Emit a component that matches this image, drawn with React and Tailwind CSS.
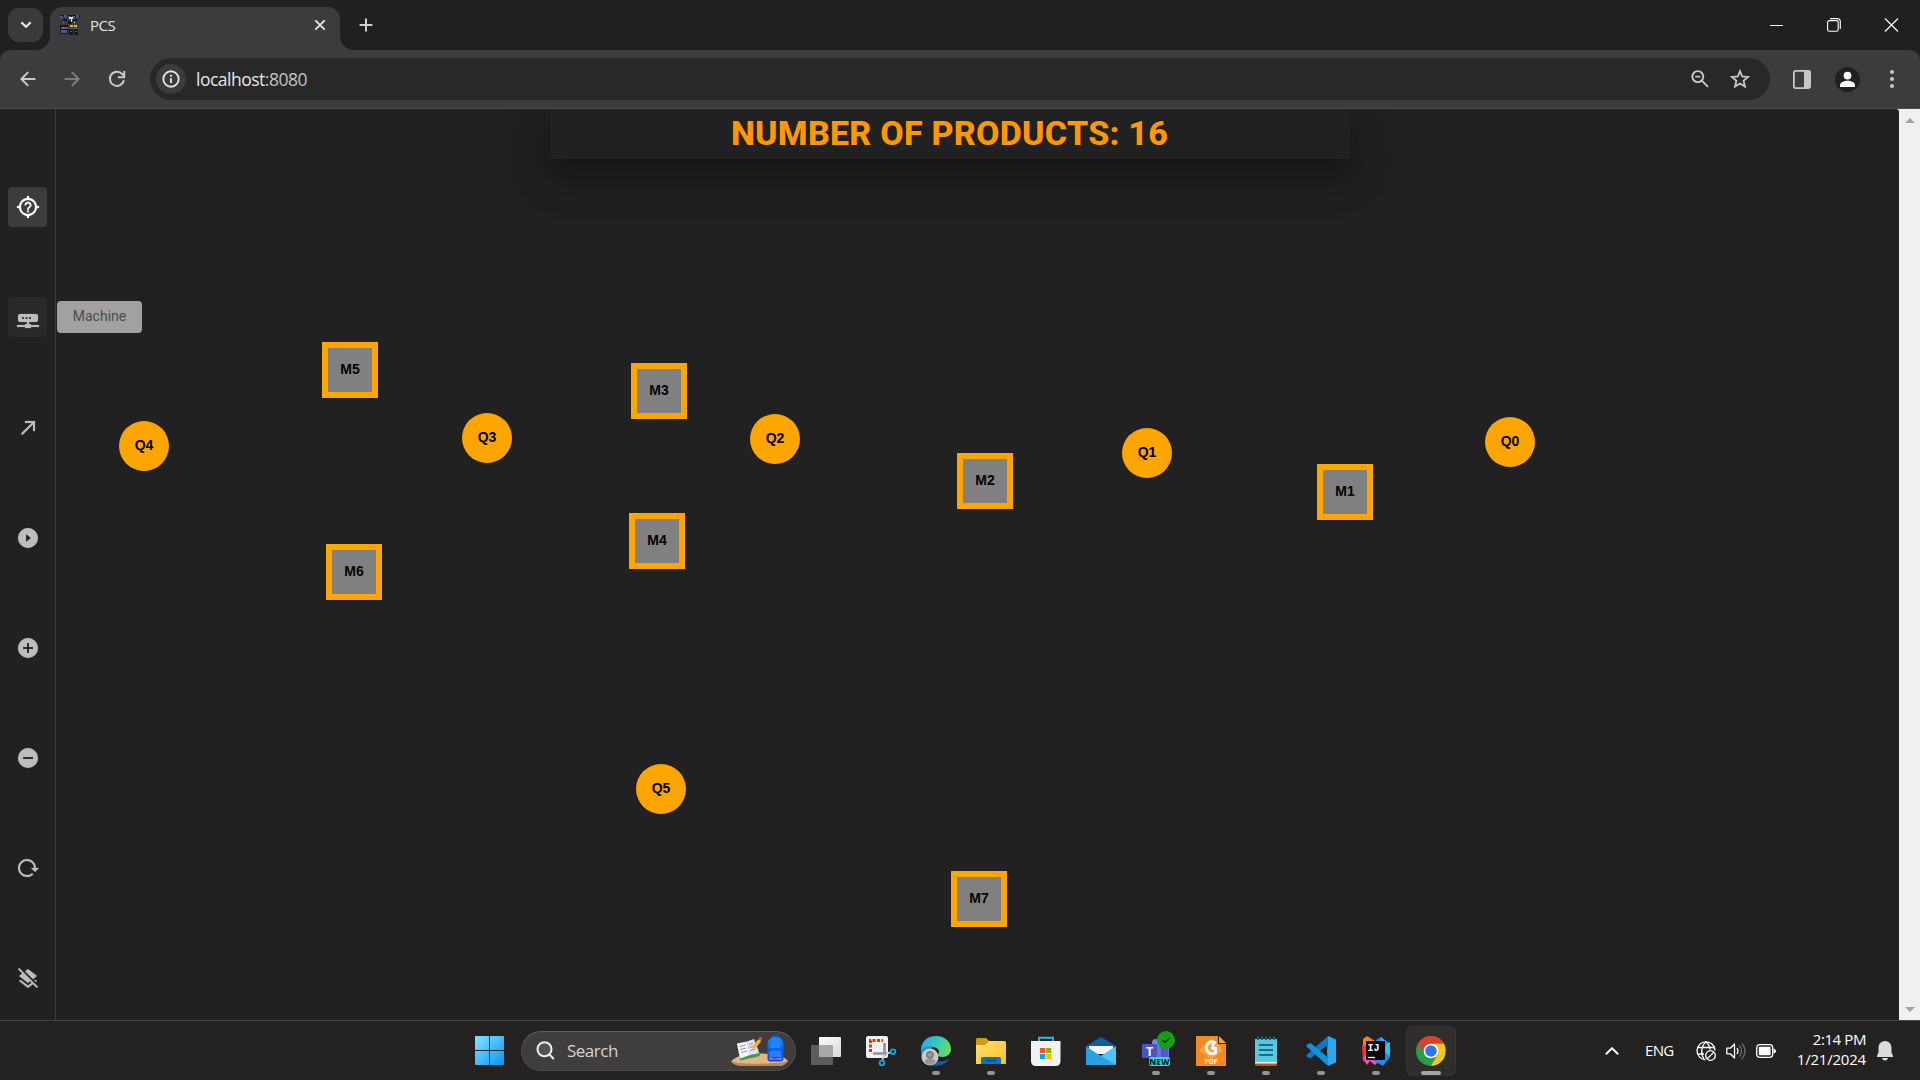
import React from "react";

const ICONS = {
  help: "M3.05 13H1V11H3.05C3.5 6.83 6.83 3.5 11 3.05V1H13V3.05C17.17 3.5 20.5 6.83 20.95 11H23V13H20.95C20.5 17.17 17.17 20.5 13 20.95V23H11V20.95C6.83 20.5 3.5 17.17 3.05 13M12 5C8.13 5 5 8.13 5 12S8.13 19 12 19 19 15.87 19 12 15.87 5 12 5M11.13 17.25H12.88V15.5H11.13V17.25M12 6.75C10.07 6.75 8.5 8.32 8.5 10.25H10.25C10.25 9.28 11.03 8.5 12 8.5S13.75 9.28 13.75 10.25C13.75 12 11.13 11.78 11.13 14.63H12.88C12.88 12.66 15.5 12.44 15.5 10.25C15.5 8.32 13.93 6.75 12 6.75Z",
  machine: "M4 9H20A2 2 0 0 1 22 11V15A2 2 0 0 1 20 17H13V19H14A1 1 0 0 1 15 20H23V22H15A1 1 0 0 1 14 23H10A1 1 0 0 1 9 22H1V20H9A1 1 0 0 1 10 19H11V17H4A2 2 0 0 1 2 15V11A2 2 0 0 1 4 9M6 12V14H8V12H6M9.5 12V14H11.5V12H9.5M13 12V14H15V12H13Z",
  arrow: "M5,17.59L15.59,7H9V5H19V15H17V8.41L6.41,19L5,17.59Z",
  play: "M2,12A10,10 0 0,1 12,2A10,10 0 0,1 22,12A10,10 0 0,1 12,22A10,10 0 0,1 2,12M10,16L15,12L10,8V16Z",
  plus: "M17,13H13V17H11V13H7V11H11V7H13V11H17M12,2A10,10 0 0,0 2,12A10,10 0 0,0 12,22A10,10 0 0,0 22,12A10,10 0 0,0 12,2Z",
  minus: "M17,13H7V11H17M12,2A10,10 0 0,0 2,12A10,10 0 0,0 12,22A10,10 0 0,0 22,12A10,10 0 0,0 12,2Z",
  reload: "M2 12C2 16.97 6.03 21 11 21C13.39 21 15.68 20.06 17.4 18.4L15.9 16.9C14.63 18.25 12.86 19 11 19C4.76 19 1.64 11.46 6.05 7.05C10.46 2.64 18 5.77 18 12H15L19 16H19.1L23 12H20C20 7.03 15.97 3 11 3C6.03 3 2 7.03 2 12Z",
  layersOff: "M3.27,1L2,2.27L6.22,6.5L3,9L4.63,10.27L12,16L14.1,14.37L15.53,15.8L12,18.54L4.63,12.81L3,14.07L12,21.07L16.95,17.22L20.73,21L22,19.73L3.27,1M19.36,10.27L21,9L12,2L9.09,4.27L16.96,12.15L19.36,10.27M19.81,15L21,14.07L19.57,12.64L18.38,13.56L19.81,15Z",
};

const TOOLS = [
  { icon: "help", cls: "bg-[#3c3c3c] text-white" },
  { icon: "machine", cls: "mt-[70px] bg-[#292929] text-[#bdbdbd]", tip: "Machine" },
  { icon: "arrow", cls: "mt-[71px] text-[#bdbdbd]" },
  { icon: "play", cls: "mt-[70px] text-[#bdbdbd]" },
  { icon: "plus", cls: "mt-[70px] text-[#bdbdbd]" },
  { icon: "minus", cls: "mt-[70px] text-[#bdbdbd]" },
  { icon: "reload", cls: "mt-[70px] text-[#bdbdbd]" },
  { icon: "layersOff", cls: "mt-[71px] text-[#bdbdbd]" },
];

// Canvas coordinates of the top-left corner of every node.
const MACHINES = [
  { id: "M5", x: 322, y: 233 },
  { id: "M3", x: 631, y: 254 },
  { id: "M4", x: 629, y: 404 },
  { id: "M6", x: 326, y: 435 },
  { id: "M2", x: 957, y: 344 },
  { id: "M1", x: 1317, y: 355 },
  { id: "M7", x: 951, y: 762 },
];
const QUEUES = [
  { id: "Q4", x: 119, y: 312 },
  { id: "Q3", x: 462, y: 304 },
  { id: "Q2", x: 750, y: 305 },
  { id: "Q1", x: 1122, y: 319 },
  { id: "Q0", x: 1485, y: 308 },
  { id: "Q5", x: 636, y: 655 },
];

function Favicon() {
  return (
    <svg width="20" height="20" viewBox="0 0 20 20" shapeRendering="crispEdges">
      <path fill="#15171c" d="M0 0h20v2H0zM3 4h4v2H3zM14 4h3v2h-3zM8 6h4v3H8zM0 10h8v9H0zM9 14h4v6H9zM14 14h4v6h-4z" />
      <path fill="#4a5c8c" d="M0 1h3v2H0zM4 0h3v2H4zM8 1h3v1H8zM12 1h3v2h-3zM16 0h3v2h-3zM3 6h1v3H3zM1 12h7v2H1zM1 15h6v3H1zM9 13h10v1H9zM10 16h2v1h-2zM15 16h2v1h-2z" />
      <path fill="#d6d8de" d="M9 2h4v2H9zM11 4h1v3h-1zM14 7h1v1h-1z" />
      <path fill="#e9b824" d="M10 10h3v2h-3zM14 10h3v2h-3z" />
      <path fill="#59c08c" d="M3 12h1v1H3z" />
    </svg>
  );
}

function TabStrip() {
  return (
    <div className="flex h-[50px] items-end bg-[#1f2120]">
      <div className="mb-2 ml-2 flex h-[34px] w-[35px] items-center justify-center rounded-[11px] bg-[#3a3a3a]">
        <svg width="12" height="8" viewBox="0 0 12 8" fill="none" stroke="#e8e8e8" strokeWidth="2.2">
          <path d="M1.3 1.2 6 5.8l4.7-4.6" />
        </svg>
      </div>
      <div className="relative ml-[7px] flex h-[43px] w-[290px] items-center rounded-t-[12px] bg-[#3c3c3c] pb-[7px] pl-[10px] pr-[14px]">
        <svg className="absolute -left-[14px] bottom-0" width="14" height="14" viewBox="0 0 14 14">
          <path d="M14 0v14H0A14 14 0 0 0 14 0" fill="#3c3c3c" />
        </svg>
        <svg className="absolute -right-[14px] bottom-0" width="14" height="14" viewBox="0 0 14 14">
          <path d="M0 0v14h14A14 14 0 0 1 0 0" fill="#3c3c3c" />
        </svg>
        <Favicon />
        <span className="ml-[10px] text-[15px] tracking-[-0.5px] text-[#e3e3e3]">PCS</span>
        <svg className="ml-auto" width="12" height="12" viewBox="0 0 12 12" stroke="#e3e3e3" strokeWidth="1.9">
          <path d="M1.3 1.3l9.4 9.4M10.7 1.3l-9.4 9.4" />
        </svg>
      </div>
      <svg className="mb-[18px] ml-[18.500px]" width="14" height="14" viewBox="0 0 14 14" stroke="#cfcfcf" strokeWidth="2">
        <path d="M7 .6v12.8M.6 7h12.8" />
      </svg>
      <div className="mb-[18px] ml-auto mr-[21px] flex items-center gap-[42px]">
        <svg className="mr-[1px]" width="14" height="14" viewBox="0 0 14 14" stroke="#fff" strokeWidth="1"><path d="M0 7.5h13" /></svg>
        <svg className="mr-[1px]" width="14" height="14" viewBox="0 0 14 14" fill="none" stroke="#fff" strokeWidth="1.1">
          <rect x=".6" y="2.6" width="10.6" height="10.6" rx="1.8" />
          <path d="M3 .6h7.3a3 3 0 0 1 3 3v7.3" />
        </svg>
        <svg width="15" height="14" viewBox="0 0 15 14" stroke="#fff" strokeWidth="1.1"><path d="M1 .5l13 13M14 .5l-13 13" /></svg>
      </div>
    </div>
  );
}

function Toolbar() {
  return (
    <div className="bg-[#1f2120]">
      <div className="flex h-[59px] items-center rounded-t-[10px] border-b border-[#4b4b4b] bg-[#3c3c3c] pl-[20px] pr-[25px]">
        <svg width="16" height="16" viewBox="0 0 16 16" fill="none" stroke="#c9c9c9" strokeWidth="2">
          <path d="M15.4 8H1.6M8.2 1.1 1.4 8l6.8 6.9" />
        </svg>
        <svg className="ml-[28px]" width="16" height="16" viewBox="0 0 16 16" fill="none" stroke="#7c7c7c" strokeWidth="2">
          <path d="M.6 8h13.800M7.800 1.100 14.600 8l-6.800 6.900" />
        </svg>
        <svg className="ml-[28px]" width="18" height="18" viewBox="0 0 18 18" fill="none" stroke="#c9c9c9" strokeWidth="2">
          <path d="M15.900 10.200A7.100 7.100 0 1 1 14.400 4.200L16 6.200" />
          <path d="M16.200 1v6.200H10" />
        </svg>
        <div className="ml-[24px] flex h-[42px] w-[1620px] items-center rounded-full bg-[#282828] pl-[6px] pr-[20px]">
          <div className="flex size-[30px] items-center justify-center rounded-full bg-[#3c3c3c]">
            <svg width="18" height="18" viewBox="0 0 18 18" fill="none" stroke="#e3e3e3" strokeWidth="1.9">
              <circle cx="9" cy="9" r="7.7" />
              <path d="M9 8.2v4.8M9 4.8v1.9" />
            </svg>
          </div>
          <span className="ml-[10px] text-[17.500px] tracking-[-0.5px] text-[#e6e6e6]">
            localhost<span className="text-[#c4c4c4]">:8080</span>
          </span>
          <svg className="ml-auto" width="18" height="18" viewBox="0 0 18 18" fill="none" stroke="#c7c7c7" strokeWidth="1.9">
            <circle cx="6.8" cy="6.6" r="5.5" />
            <path d="M4.2 6.6h5.2M10.8 10.6l6.2 6.3" />
          </svg>
          <svg className="ml-[21px]" width="20" height="20" viewBox="0 0 20 20" fill="none" stroke="#c7c7c7" strokeWidth="1.8">
            <path d="M10 2.2l2.2 5.3 5.8.5-4.4 3.8 1.4 5.7-5-3-5 3 1.4-5.7L2 8l5.8-.5z" />
          </svg>
        </div>
        <svg className="ml-[23px]" width="18" height="19" viewBox="0 0 18 19">
          <rect x=".9" y=".9" width="16.2" height="17.2" rx="1.5" fill="none" stroke="#c7c7c7" strokeWidth="1.8" />
          <path d="M11 1h6v17h-6z" fill="#c7c7c7" />
        </svg>
        <svg className="ml-[24px]" width="25" height="25" viewBox="0 0 25 25">
          <circle cx="12.5" cy="12.5" r="12.5" fill="#1f2120" />
          <circle cx="12.5" cy="8.6" r="3.9" fill="#fff" />
          <path d="M5 19.9v-1.6c0-3 4-4.5 7.5-4.5s7.5 1.5 7.5 4.5v1.6z" fill="#fff" />
        </svg>
        <svg className="ml-auto" width="6" height="18" viewBox="0 0 6 18" fill="#c7c7c7">
          <circle cx="3" cy="2" r="2" /><circle cx="3" cy="9" r="2" /><circle cx="3" cy="16" r="2" />
        </svg>
      </div>
    </div>
  );
}

function Sidebar() {
  return (
    <nav className="flex w-[56px] shrink-0 flex-col border-r border-[#3d3d3d] pl-2 pt-[78px]">
      {TOOLS.map((t) => (
        <div key={t.icon} className={"relative flex h-10 w-[39px] shrink-0 items-center justify-center rounded " + t.cls}>
          <svg className="relative left-[0.5px] size-6 shrink-0" viewBox="0 0 24 24" fill="currentColor" stroke="currentColor" strokeWidth=".2" fillRule="evenodd">
            <path d={ICONS[t.icon]} />
          </svg>
          {t.tip && (
            <div className="absolute left-[49px] top-[4px] z-10 flex h-8 w-[85px] items-center justify-center rounded bg-[#a1a1a1] pb-[2px] font-[Roboto,sans-serif] text-sm text-[#4c4c4c]">
              {t.tip}
            </div>
          )}
        </div>
      ))}
    </nav>
  );
}

function Page() {
  return (
    <div className="flex h-[911px] bg-[#f0f0f0]">
      <main className="relative flex w-[1899px] overflow-hidden rounded-tr-[3px] bg-[#212121]">
        <Sidebar />
        <div className="flex flex-1 items-start justify-center pr-[56px]">
          <h1 className="flex h-[50px] w-[800px] items-center justify-center rounded-b bg-[#212121] pb-[2px] font-[Roboto,sans-serif] text-[34px] font-extrabold tracking-[0.25px] text-[#ff9800] shadow-[0_11px_15px_-7px_rgba(0,0,0,0.2),0_24px_38px_3px_rgba(0,0,0,0.14),0_9px_46px_8px_rgba(0,0,0,0.12)]">
            NUMBER OF PRODUCTS: 16
          </h1>
        </div>
        {MACHINES.map((m) => (
          <div
            key={m.id}
            style={{ left: m.x, top: m.y }}
            className="absolute flex size-14 items-center justify-center border-[6px] border-[#ffa500] bg-[#808080] pb-[2px] font-['Liberation_Sans',sans-serif] text-sm font-bold text-black"
          >
            {m.id}
          </div>
        ))}
        {QUEUES.map((q) => (
          <div
            key={q.id}
            style={{ left: q.x, top: q.y }}
            className="absolute flex size-[50px] items-center justify-center rounded-full bg-[#ffa500] pb-[2px] font-['Liberation_Sans',sans-serif] text-sm font-bold text-black"
          >
            {q.id}
          </div>
        ))}
      </main>
      <div className="flex flex-1 flex-col items-center justify-between pb-[8px] pt-[9px]">
        <svg width="10" height="5" viewBox="0 0 10 5" fill="#a3a3a3"><path d="M0 5 5 0l5 5z" /></svg>
        <svg width="10" height="5" viewBox="0 0 10 5" fill="#a3a3a3"><path d="M0 0h10L5 5z" /></svg>
      </div>
    </div>
  );
}

function SearchArt() {
  return (
    <svg width="58" height="32" viewBox="0 0 58 32">
      <defs>
        <linearGradient id="pack" x1="0" y1="0" x2="0" y2="1">
          <stop offset="0" stopColor="#1f8fff" /><stop offset=".5" stopColor="#0a62e8" /><stop offset="1" stopColor="#0b50c8" />
        </linearGradient>
      </defs>
      <path d="M0 26.500C6 20 16 18.500 29 18.500S52 20 57 26c-2 2-4 4-7 5H9c-4-1-7-2.500-9-4.500" fill="#e2b683" />
      <path d="M0 26.500C2 28.500 5 30 9 31h41c3-1 5-3 7-5-8 3-45 4-57 .5" fill="#b98a5c" />
      <path d="M6 9l3 16.500 20-4.500-2-9z" fill="#3f9a54" />
      <path d="M6 8.500l10-2 3 13.500-10 3.500z" fill="#f7f5fa" /><path d="M16 6.500l7-2.500 5 14-9 2z" fill="#e6e2f2" />
      <path d="M8.500 11.500l6-1.300M9.200 14.500l6-1.400M10 17.500l6-1.400M18 9.500l4-1.400M18.600 12.500l4.500-1.500M19.500 15.500l5-1.500" stroke="#8d86b0" strokeWidth=".9" />
      <path d="M21 14l1.500-4 5-6 2.800 2-5 6.500z" fill="#ffb02e" /><path d="M27.500 4l1.500-2.500 2.400 1.500-1.200 3z" fill="#e8453c" />
      <path d="M41 3.500C41 -.3 48 -.3 48 3.500" fill="none" stroke="#0e59c9" strokeWidth="1.600" />
      <path d="M36.500 10c0-5 3-8 8-8s8 3 8 8v13.500c0 2-1 3-3 3h-10c-2 0-3-1-3-3z" fill="url(#pack)" />
      <path d="M39.500 8c2-4 8-4 10 0v5h-10z" fill="#1e86ff" /><path d="M38.500 17c2-2.500 10-2.500 12 0v5h-12z" fill="#2b7bff" />
      <path d="M38.500 22.500c4 1.500 8 1.500 12 0v2h-12z" fill="#b77bff" />
    </svg>
  );
}

const APP_ICONS = {
  taskview: (
    <>
      <defs>
        <linearGradient id="tv" x1="0" y1="0" x2="1" y2="1"><stop offset="0" stopColor="#fff" /><stop offset="1" stopColor="#d8d8d8" /></linearGradient>
      </defs>
      <rect x="8" y="1" width="22" height="20" rx="1" fill="url(#tv)" />
      <rect x="0" y="9" width="22" height="20" rx="1" fill="#5c5c5c" /><path d="M8 9h14v12H8z" fill="#a9a9a9" />
    </>
  ),
  snip: (
    <>
      <rect x="0" y="0" width="22" height="22" rx="2" fill="#eef1f6" />
      <path d="M4.500 16V4.500H17" fill="none" stroke="#d83b01" strokeWidth="3" strokeDasharray="3 1.500" />
      <path d="M18.500 7v13M7 17.500h14" stroke="#8d949b" strokeWidth="2.600" />
      <path d="M18.500 18l-2 6M20 17.500l5-1" stroke="#c4c9ce" strokeWidth="2" />
      <circle cx="16" cy="27" r="2.300" fill="none" stroke="#1ba0e2" strokeWidth="1.800" /><circle cx="27" cy="15.700" r="2.300" fill="none" stroke="#1ba0e2" strokeWidth="1.800" />
    </>
  ),
  edge: (
    <>
      <defs>
        <linearGradient id="e1" x1="0" y1=".3" x2="1" y2=".6"><stop offset="0" stopColor="#2aa8e8" /><stop offset=".5" stopColor="#33c9c0" /><stop offset="1" stopColor="#6be04c" /></linearGradient>
        <linearGradient id="e2" x1="0" y1="0" x2="0" y2="1"><stop offset="0" stopColor="#1b9de0" /><stop offset="1" stopColor="#0d4fa8" /></linearGradient>
      </defs>
      <path d="M0 14C0 6 6 0 15 0c9 0 15 6 15 13 0 5-4 8-8.500 8-3 0-5-1-4.500-2.500 2-2 1-6-3-7C9 10 3 11 0 16z" fill="url(#e1)" />
      <path d="M0 15c2-4 7-6 12-4-4 3-4 10 1 13 4 2.500 10 2 15-1-3 4.500-8 7-13 7C6 30 0 23 0 15" fill="url(#e2)" />
      <circle cx="9" cy="21" r="8.500" fill="#c9c9c9" /><circle cx="9" cy="18.800" r="3" fill="#a2a2a2" stroke="#7a7a7a" strokeWidth="1.800" /><path d="M3.500 26c1-5 10-5 11 0-3 3.500-8 3.500-11 0" fill="#949494" />
    </>
  ),
  files: (
    <>
      <defs>
        <linearGradient id="fo" x1="0" y1="0" x2="1" y2="1"><stop offset="0" stopColor="#ffdf73" /><stop offset="1" stopColor="#fcbf28" /></linearGradient>
      </defs>
      <path d="M0 3.500Q0 2 1.500 2H10l4 4v6H0z" fill="#d79a0a" />
      <path d="M0 9h9l4-4h15.500Q30 5 30 6.500V28H0z" fill="url(#fo)" />
      <path d="M5 28v-5q0-2 2-2h16q2 0 2 2v5z" fill="#1170c4" /><path d="M10 24.500h10" stroke="#0b4c8a" strokeWidth="1.500" />
    </>
  ),
  store: (
    <>
      <path d="M8 8V1.800h14V8" fill="none" stroke="#2fb5ee" strokeWidth="1.900" />
      <path d="M0 5h29.500v20q0 5-5 5H5q-5 0-5-5z" fill="#f1f1f1" />
      <path d="M9 12h5.200v5H9z" fill="#f25022" /><path d="M15.200 12h5v5h-5z" fill="#7fba00" /><path d="M9 18h5.200v5H9z" fill="#00a4ef" /><path d="M15.200 18h5v5h-5z" fill="#ffb900" />
    </>
  ),
  mail: (
    <>
      <path d="M0 10 15 1l15 9v5H0z" fill="#0f5ea8" /><path d="M3 10h24v8H3z" fill="#f3f3f3" />
      <path d="M0 10.500 15 20l15-9.500V29H0z" fill="#2b9fe6" /><path d="M30 10.500V29L12 18.500l3 1.500z" fill="#4fc4f5" />
    </>
  ),
  teams: (
    <>
      <circle cx="15" cy="7" r="4" fill="#7b83eb" /><path d="M12 9h16v11q0 5-6 5h-6z" fill="#6a71d8" />
      <path d="M20 12h7v11h-7z" fill="#5059c9" /><rect x="1" y="8" width="15" height="14" rx="1" fill="#4b53bc" />
      <text x="8.600" y="19.600" textAnchor="middle" fontSize="12.500" fontWeight="700" fill="#fff" fontFamily="Open Sans, sans-serif">T</text>
      <circle cx="25" cy="4" r="9" fill="#13a10e" /><path d="M21.500 4.200l2.500 2.300 4.500-4.500" fill="none" stroke="#0b3d0a" strokeWidth="1.600" />
      <rect x="8" y="21" width="21" height="9" rx="2" fill="#22e1e8" />
      <text x="18.500" y="28.600" textAnchor="middle" fontSize="8.400" fontWeight="800" fill="#0b2b30" fontFamily="Open Sans, sans-serif">NEW</text>
    </>
  ),
  pdf: (
    <>
      <path d="M0 0h22l8 8v22H0z" fill="#f58a1f" /><path d="M23 0l7 7h-7z" fill="#f9a23b" /><path d="M22.500 0v7.500H30" fill="none" stroke="#2b2320" strokeWidth="1" />
      <path d="M15 2l12 12-12 10L3 14z" fill="#f8a04a" />
      <path d="M19.800 7.200A5.800 6 0 1 0 19.500 16.500V12.300h-4.500M18.800 5.800l-2.800 4.700" fill="none" stroke="#fff" strokeWidth="2.900" />
      <text x="15.300" y="27.500" textAnchor="middle" fontSize="6.600" fontWeight="700" fill="#fff" fontFamily="Inter, sans-serif">PDF</text>
    </>
  ),
  notepad: (
    <>
      <path d="M4 3h22v24H4z" fill="#5cc6e0" /><path d="M4 27h22v1.500q0 1.500-1.500 1.500h-19Q4 30 4 28.500z" fill="#b35b14" /><path d="M4 26h22v1.500H4z" fill="#e9eef0" />
      <path d="M7 .5v3.500M11 .5v3.500M15 .5v3.500M19 .5v3.500M23 .5v3.500" stroke="#11667f" strokeWidth="2" />
      <path d="M8 9h14M8 14h14M8 19h14" stroke="#14708a" strokeWidth="1.800" />
    </>
  ),
  code: (
    <>
      <path d="M22 0l8 3.500v23L22 30 21 15z" fill="#2ba7f2" /><path d="M22 0v8.500L4.500 22.500 1 21q-1.500-1.200 0-2.500z" fill="#0a78c4" />
      <path d="M22 30v-8.500L4.500 7 1 8.500q-1.500 1.200 0 2.500z" fill="#1390dc" />
    </>
  ),
  idea: (
    <>
      <path d="M2 3l4-3 8 5-6 12-6-3z" fill="#fc801d" /><path d="M1 9l6 1v12l-5 3z" fill="#fe2857" /><path d="M2 23l5-9 12 10-5 5-5-4-3 4z" fill="#ec4fb5" />
      <path d="M15 4l5-3 8 6 1 14-7 9-9-5z" fill="#1a8bf4" /><path d="M20 1l5 5-4 4zM25 8l4-2 0 14-5-4z" fill="#27c3f3" />
      <path d="M5 5h19v19H5z" fill="#0b0608" />
      <text x="6.500" y="15" fontSize="10" fontWeight="700" fill="#fff" fontFamily="Liberation Mono, monospace">IJ</text>
      <path d="M7 21.500h7" stroke="#fff" strokeWidth="1.300" />
    </>
  ),
  chrome: (
    <>
      <circle cx="15" cy="15" r="15" fill="#2a9d48" />
      <path d="M15 7.500h13q3 6.500 0 14.500Q24 29 15 30l6.500-11.300z" fill="#fcc31e" />
      <path d="M2 7.500A15 15 0 0 1 28 7.500H15a7.500 7.500 0 0 0-6.500 11z" fill="#e33b2e" />
      <circle cx="15" cy="15" r="7.300" fill="#fff" /><circle cx="15" cy="15" r="5.800" fill="#2c78ea" />
    </>
  ),
};

const APPS = [
  ["taskview", false], ["snip", false], ["edge", true], ["files", true], ["store", false], ["mail", false],
  ["teams", true], ["pdf", true], ["notepad", true], ["code", true], ["idea", true], ["chrome", true],
];

function Taskbar() {
  return (
    <footer className="flex h-[60px] items-center border-t border-[#474645] bg-[#232221] pl-[475px] pr-[27px]">
      <svg width="29" height="29" viewBox="0 0 29 29">
        <defs>
          <linearGradient id="win" x1="0" y1="0" x2="1" y2="1"><stop offset="0" stopColor="#7fe6ff" /><stop offset="1" stopColor="#0a93f5" /></linearGradient>
        </defs>
        <path fill="url(#win)" d="M0 1q0-1 1-1h13v14H0zM15 0h13q1 0 1 1v13H15zM0 15h14v14H1q-1 0-1-1zM15 15h14v13q0 1-1 1H15z" />
      </svg>
      <div className="ml-[17px] flex h-10 w-[275px] items-center rounded-full border border-[#4c4b4a] border-t-[#605d5d] bg-[#3f3e3d] pl-[14px] pr-[6px]">
        <svg width="19" height="19" viewBox="0 0 19 19" fill="none" stroke="#ececec" strokeWidth="2.100">
          <circle cx="8.500" cy="8.300" r="7" fill="#505357" /><path d="M13.400 13.500l4.400 4.500" />
        </svg>
        <span className="ml-[12px] text-[17px] tracking-[-0.5px] text-[#d4d4d4]">Search</span>
        <div className="ml-auto"><SearchArt /></div>
      </div>
      <div className="ml-[15px] flex gap-[25px]">
        {APPS.map(([name, running]) => {
          const active = name === "chrome";
          return (
            <div key={name} className="relative size-[30px]">
              {active && <div className="absolute -inset-[10px] rounded-md border border-[#353433] bg-[#2f2e2d]" />}
              <svg className="relative size-[30px] overflow-visible" viewBox="0 0 30 30">{APP_ICONS[name]}</svg>
              {running && (
                <div className={"absolute left-1/2 top-[35px] h-[4px] -translate-x-1/2 rounded-full " + (active ? "w-5 bg-[#a6a5a4]" : "w-2 bg-[#959493]")} />
              )}
            </div>
          );
        })}
      </div>
      <svg className="ml-auto" width="14" height="8" viewBox="0 0 14 8" fill="none" stroke="#fff" strokeWidth="1.900"><path d="M.8 7.200 7 1.200l6.200 6" /></svg>
      <span className="ml-[26px] w-[29px] text-[15px] tracking-[-0.7px] text-white">ENG</span>
      <svg className="ml-[22px]" width="20" height="20" viewBox="0 0 20 20" fill="none" stroke="#fff" strokeWidth="1.300">
        <path d="M9.500 18.800A9 9 0 1 1 19 9.500" /><path d="M8 18C4.500 13 5 5 10 1c2.500 2 3.800 4.500 4 7.500M1.500 6.500h17M1.500 13H8" />
        <circle cx="14.500" cy="14.500" r="4.800" /><path d="M11.200 17.800l6.600-6.600" />
      </svg>
      <svg className="ml-[10px]" width="20" height="18" viewBox="0 0 20 18" fill="none" stroke="#fff" strokeWidth="1.300">
        <path d="M.8 6.200h3.500L8.500 2v14l-4.200-4.200H.8z" strokeLinejoin="round" /><path d="M11 6q2 3 0 6" />
        <path d="M13.500 3.500q4 5.500 0 11M16 1.200q6 7.800 0 15.600" stroke="#6d6c6b" />
      </svg>
      <svg className="ml-[10px]" width="20" height="14" viewBox="0 0 20 14">
        <rect x=".7" y=".7" width="16" height="12.600" rx="3" fill="none" stroke="#fff" strokeWidth="1.300" /><rect x="2.800" y="2.800" width="11.800" height="8.400" rx="1" fill="#fff" />
        <path d="M17.500 4.500q2.500.5 2.500 2.500t-2.500 2.500z" fill="#fff" />
      </svg>
      <div className="ml-[20px] w-[70px] whitespace-nowrap pb-[4px] text-right text-[15px] leading-[20px] text-white">
        <div className="tracking-[-0.4px]">2:14 PM</div>
        <div className="tracking-[-0.2px]">1/21/2024</div>
      </div>
      <svg className="ml-[11px]" width="16" height="20" viewBox="0 0 16 20" fill="#dcdbda">
        <path d="M8 0c4 0 6.500 3 6.500 7v4.500L16 15v1H0v-1l1.500-3.500V7c0-4 2.500-7 6.500-7M5 17h6q-.5 2.500-3 2.500T5 17" />
      </svg>
    </footer>
  );
}

export default function App() {
  return (
    <div className="flex h-[1080px] w-[1920px] flex-col overflow-hidden font-['Open_Sans',sans-serif]">
      <TabStrip />
      <Toolbar />
      <Page />
      <Taskbar />
    </div>
  );
}
